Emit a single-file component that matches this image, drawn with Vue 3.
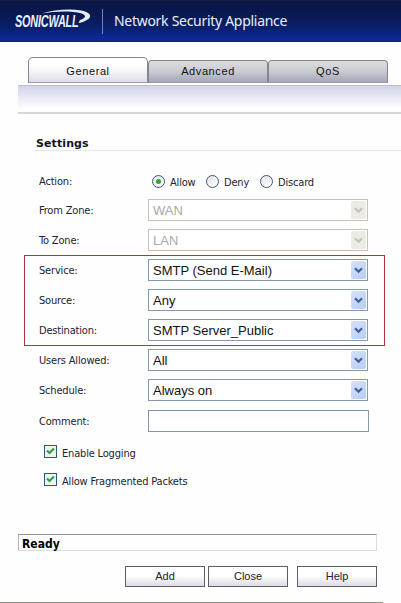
<template>
  <div class="appliance">
    <header class="banner">
      <div class="logo">
        <span class="logo-text">SONICWALL</span>
        <svg class="logo-swoosh" width="50" height="16" viewBox="0 0 50 16">
          <path d="M0 4.5C11 1 26-0.5 38 1.2C50 3 51 9 43 12C41 13 39 13.6 36.5 14L38 11C44 9 45 6 39 4.2C29 1.6 12 2.2 0 4.5Z" fill="#e6edff" />
        </svg>
      </div>
      <span class="divider"></span>
      <h1 class="product">Network Security Appliance</h1>
    </header>

    <nav class="tabs">
      <button
        v-for="tab in tabs"
        :key="tab"
        class="tab"
        :class="{ active: activeTab === tab }"
        @click="activeTab = tab"
      >
        {{ tab }}
      </button>
    </nav>
    <div class="band"></div>

    <h2 class="section-title">Settings</h2>

    <div class="row action-row">
      <span class="label">Action:</span>
      <label v-for="item in actions" :key="item" class="radio">
        <input v-model="action" type="radio" name="action" :value="item">
        <span class="dot"></span>
        <span class="radio-text">{{ item }}</span>
      </label>
    </div>

    <div
      v-for="(group, index) in groups"
      :key="index"
      class="group"
      :class="{ highlighted: group.highlighted }"
    >
      <div v-for="field in group.fields" :key="field.label" class="row">
        <span class="label">{{ field.label }}:</span>
        <div class="select" :class="{ disabled: field.disabled }">
          <span class="value">{{ field.value }}</span>
          <span class="arrow">
            <svg width="9" height="7" viewBox="0 0 9 7">
              <path d="M1 1.2L4.5 4.7L8 1.2" fill="none" stroke="currentColor" stroke-width="2.2" />
            </svg>
          </span>
        </div>
      </div>
    </div>

    <div class="row comment-row">
      <span class="label">Comment:</span>
      <input v-model="comment" class="comment" type="text">
    </div>

    <div class="checks">
      <label v-for="option in options" :key="option.label" class="check">
        <input v-model="option.checked" type="checkbox">
        <span class="box">
          <svg v-if="option.checked" width="9" height="9" viewBox="0 0 9 9">
            <path d="M1 3.5L3.5 6L8 1.5" fill="none" stroke="#3c9a4c" stroke-width="2.2" />
          </svg>
        </span>
        <span>{{ option.label }}</span>
      </label>
    </div>

    <div class="status">Ready</div>

    <div class="buttons">
      <button class="btn">Add</button>
      <button class="btn">Close</button>
      <button class="btn help">Help</button>
    </div>
    <div class="bottom-line"></div>
  </div>
</template>

<script setup>
import { ref } from 'vue'

const tabs = ['General', 'Advanced', 'QoS']
const activeTab = ref('General')

const actions = ['Allow', 'Deny', 'Discard']
const action = ref('Allow')
const comment = ref('')

const groups = [
  {
    fields: [
      { label: 'From Zone', value: 'WAN', disabled: true },
      { label: 'To Zone', value: 'LAN', disabled: true }
    ]
  },
  {
    highlighted: true,
    fields: [
      { label: 'Service', value: 'SMTP (Send E-Mail)' },
      { label: 'Source', value: 'Any' },
      { label: 'Destination', value: 'SMTP Server_Public' }
    ]
  },
  {
    fields: [
      { label: 'Users Allowed', value: 'All' },
      { label: 'Schedule', value: 'Always on' }
    ]
  }
]

const options = ref([
  { label: 'Enable Logging', checked: true },
  { label: 'Allow Fragmented Packets', checked: true }
])
</script>

<style>
body {
  margin: 0;
  background: #fefefe;
}
</style>

<style scoped>
.appliance {
  display: flex;
  flex-direction: column;
  width: 401px;
  height: 603px;
  overflow: hidden;
  box-sizing: border-box;
  background: #fefefe;
  color: #222230;
  font-family: "DejaVu Sans Condensed", "DejaVu Sans", sans-serif;
  font-stretch: condensed;
  font-size: 11px;
  letter-spacing: -0.18px;
}

.banner {
  display: flex;
  align-items: center;
  flex: none;
  height: 42px;
  box-sizing: border-box;
  padding-left: 15px;
  background: linear-gradient(#182343 0, #0a1545 2px, #091a55 18px, #0a2173 30px, #0b2b9c 39px, #14206a 42px);
  color: #e9f0ff;
}

.logo {
  position: relative;
  width: 76px;
  height: 24px;
}

.logo-text {
  display: block;
  width: max-content;
  transform: scaleX(0.68);
  transform-origin: left;
  padding-top: 4px;
  font: italic bold 16px/18px "Liberation Sans", sans-serif;
  letter-spacing: -0.3px;
  white-space: nowrap;
}

.logo-swoosh {
  position: absolute;
  left: 27px;
  top: 0;
}

.divider {
  width: 1px;
  height: 25px;
  margin: 0 11px;
  background: #7484bb;
}

.product {
  margin: 0;
  font: 400 14px/20px "Noto Sans", sans-serif;
  letter-spacing: -0.29px;
  white-space: nowrap;
}

.tabs {
  display: flex;
  align-items: flex-end;
  flex: none;
  height: 26px;
  margin: 15px 0 0 28px;
}

.tab {
  width: 120px;
  height: 23px;
  box-sizing: border-box;
  padding: 0 0 1px;
  border: 1px solid #85858d;
  border-bottom-color: #9a9aab;
  border-radius: 4px 4px 0 0;
  background: linear-gradient(#dedee0, #c9cad2 50%, #a4a6bb);
  color: #111;
  font: 11px/16px "Liberation Sans", sans-serif;
  letter-spacing: 0.6px;
}

.tab.active {
  height: 26px;
  padding: 1px 0 0;
  border-radius: 5px 5px 0 0;
  background: linear-gradient(#fff 30%, #dedeec);
}

.band {
  flex: none;
  height: 29px;
  box-sizing: border-box;
  margin: 2px 0 0 18px;
  border-top: 1px solid #b9bdcc;
  border-bottom: 2px solid #d4d6dc;
  background: linear-gradient(#d2d4e8, #fdfdff 85%);
}

.section-title {
  flex: none;
  height: 16px;
  margin: 21px 0 0 34px;
  padding: 1px 0 0 2px;
  box-sizing: border-box;
  border-bottom: 1px solid #e6e6e8;
  color: #151522;
  font: bold 11px/16px "DejaVu Sans", sans-serif;
  letter-spacing: 0.1px;
}

.row {
  display: flex;
  align-items: center;
  flex: none;
  height: 30px;
  padding-left: 39px;
}

.action-row {
  height: 28px;
  margin-top: 16px;
}

.label {
  width: 109px;
  white-space: nowrap;
}

.radio {
  display: flex;
  align-items: center;
  width: 50px;
  height: 13px;
  margin-left: 4px;
}

.radio input,
.check input {
  display: none;
}

.dot {
  display: flex;
  align-items: center;
  justify-content: center;
  flex: none;
  width: 13px;
  height: 13px;
  box-sizing: border-box;
  border: 1px solid #3c5a78;
  border-radius: 50%;
  background: linear-gradient(135deg, #e2e6e6, #fff);
}

.radio input:checked + .dot::after {
  content: "";
  width: 5px;
  height: 5px;
  border-radius: 50%;
  background: #2fa33c;
}

.radio-text {
  margin: 3px 0 0 5px;
}

.highlighted {
  height: 89px;
  width: 359px;
  margin: 0 0 -1px 24px;
  border: 1px solid #b8303c;
}

.highlighted .row {
  position: relative;
  top: -1px;
  padding-left: 14px;
}

.group,
.comment-row {
  flex: none;
}

.select {
  display: flex;
  align-items: center;
  justify-content: space-between;
  width: 220px;
  height: 22px;
  box-sizing: border-box;
  padding: 1px 1px 1px 4px;
  border: 1px solid #8399ae;
  background: #fff;
  color: #111;
}

.value {
  padding-top: 1px;
  font: 13px/18px "Liberation Sans", sans-serif;
  letter-spacing: 0;
  white-space: pre;
}

.arrow {
  display: flex;
  align-items: center;
  justify-content: center;
  width: 15px;
  height: 18px;
  border-radius: 2px;
  background: linear-gradient(135deg, #d5e2fb, #b7ccf5);
  color: #425e96;
}

.select.disabled {
  border-color: #c2c2ba;
  color: #aaaaa6;
}

.disabled .arrow {
  background: #ecebe4;
  color: #c4c3b8;
}

.comment-row {
  margin-top: 1px;
}

.comment {
  width: 221px;
  height: 22px;
  box-sizing: border-box;
  border: 1px solid #8497ad;
  background: #fff;
}

.checks {
  display: flex;
  flex-direction: column;
  gap: 15px;
  flex: none;
  margin: 9px 0 0 44px;
}

.check {
  display: flex;
  align-items: center;
  height: 13px;
  gap: 5px;
  white-space: nowrap;
}

.check > span:last-child {
  padding-top: 3px;
}

.box {
  display: flex;
  align-items: center;
  justify-content: center;
  width: 13px;
  height: 13px;
  box-sizing: border-box;
  border: 1px solid #2f5878;
  background: #edf5ee;
}

.status {
  flex: none;
  width: 359px;
  height: 17px;
  box-sizing: border-box;
  margin: 48px 0 0 18px;
  padding-left: 3px;
  border: 1px solid #deded8;
  border-top-color: #93939b;
  border-left-color: #b5b5b9;
  color: #000;
  font: bold 12px/18px "DejaVu Sans Condensed", "DejaVu Sans", sans-serif;
  font-stretch: condensed;
  letter-spacing: 0;
}

.buttons {
  display: flex;
  flex: none;
  gap: 3px;
  margin: 15px 0 0 125px;
}

.btn {
  width: 80px;
  height: 21px;
  box-sizing: border-box;
  padding: 0;
  border: 1px solid #5c5c6c;
  border-radius: 0;
  background: linear-gradient(#fff 45%, #dcdce2);
  color: #202030;
  font: 11px/17px "Liberation Sans", sans-serif;
  letter-spacing: 0;
}

.help {
  margin-left: 6px;
}

.bottom-line {
  flex: none;
  width: 383px;
  height: 1px;
  margin-top: 15px;
  background: #8c8e7a;
}
</style>
